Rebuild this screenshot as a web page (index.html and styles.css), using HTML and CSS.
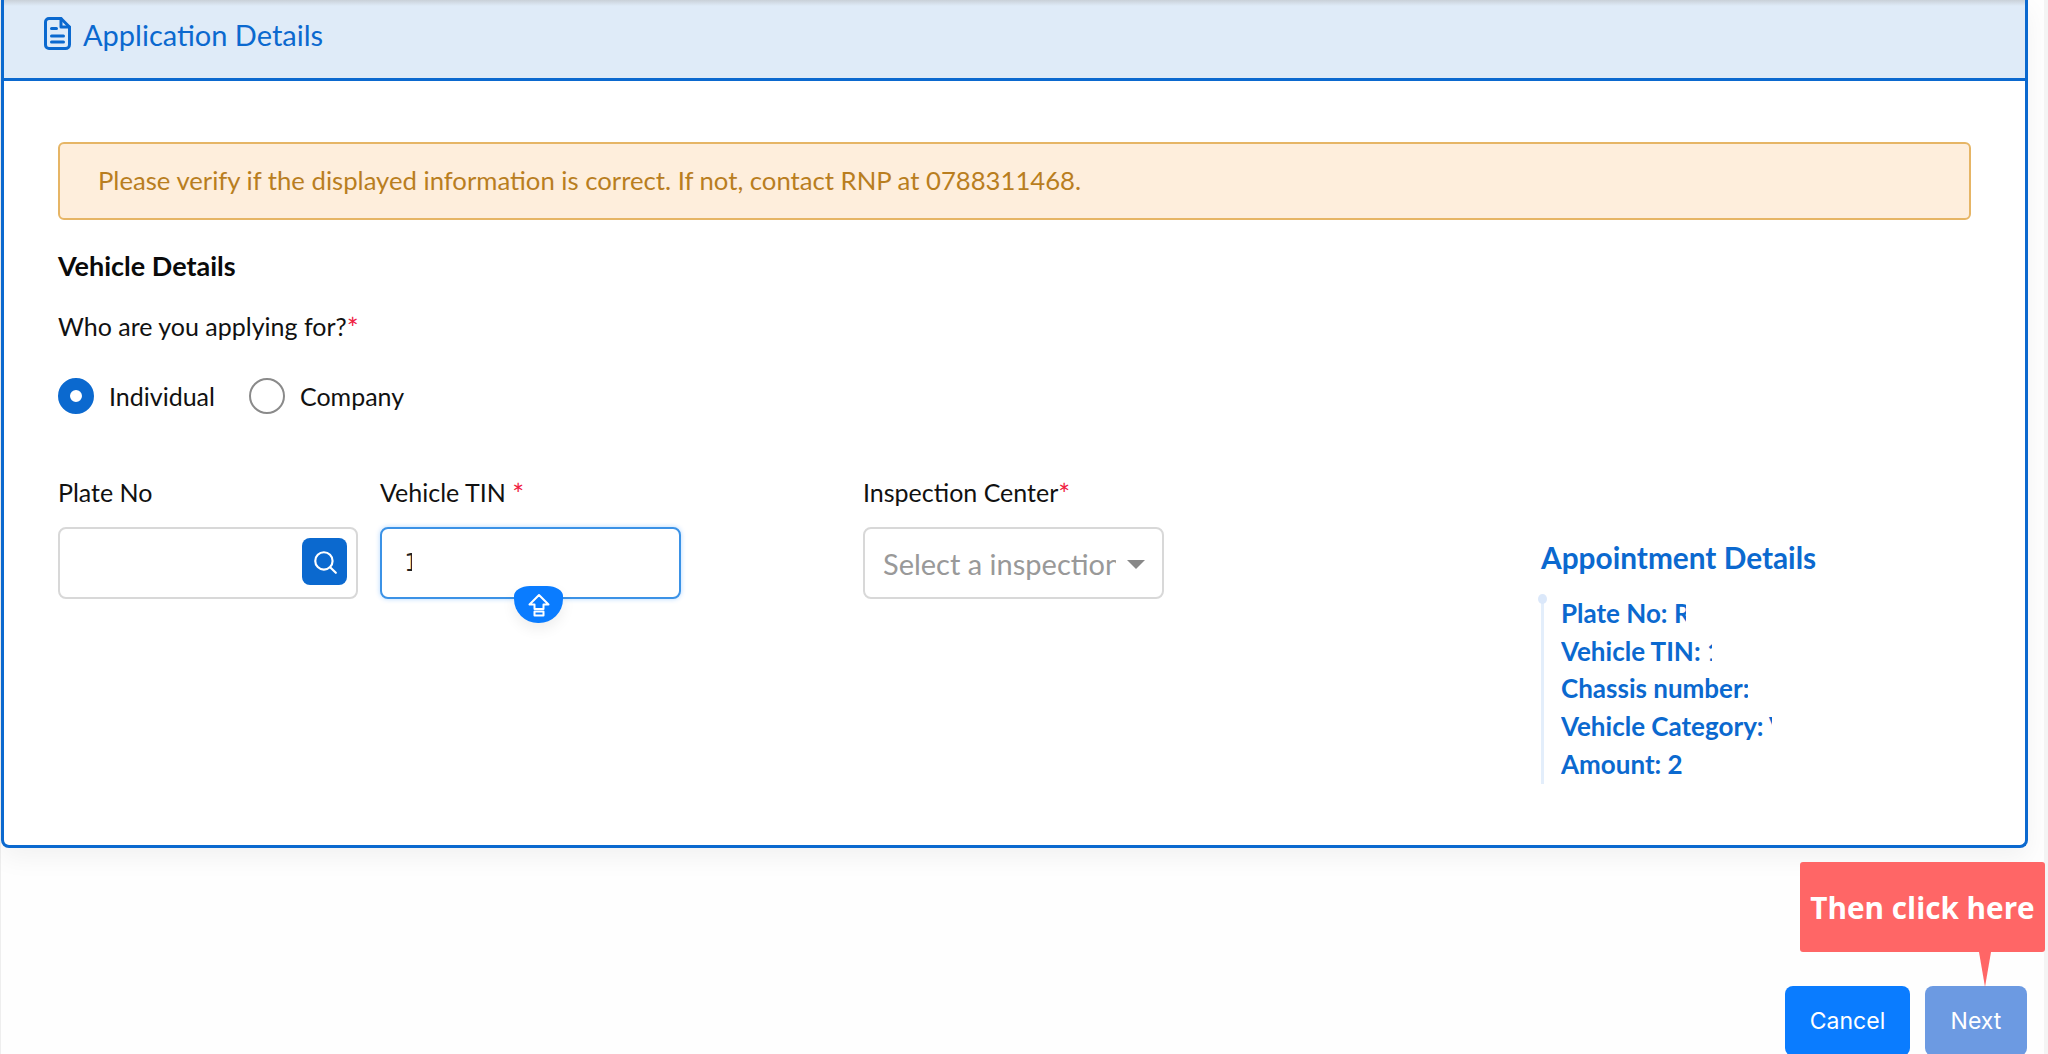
FILE: index.html
```html
<!DOCTYPE html>
<html lang="en">
<head>
<meta charset="utf-8">
<title>Application Details</title>
<link rel="stylesheet" href="styles.css">
</head>
<body>
<div class="page">
  <main class="main">
    <section class="card">
      <header class="card-head">
        <svg class="doc-icon" viewBox="0 0 27 33" fill="none" stroke="#0b69cf" stroke-width="3" stroke-linejoin="round" stroke-linecap="round">
          <path d="M5 1.500h12l8.500 8.500v17.500a4 4 0 0 1-4 4H5a3.500 3.500 0 0 1-3.500-3.500V5A3.500 3.500 0 0 1 5 1.500z"/>
          <path d="M17 1.500V10h8.500"/>
          <path d="M7.500 11.500h5M7.500 19h12M7.500 25h12"/>
        </svg>
        <h1 class="card-title">Application Details</h1>
      </header>
      <div class="card-body">
        <div class="alert">Please verify if the displayed information is correct. If not, contact RNP at 0788311468.</div>
        <h2 class="section-title">Vehicle Details</h2>
        <p class="question">Who are you applying for?<span class="req">*</span></p>
        <div class="radios">
          <label class="radio"><span class="dot dot-on"></span>Individual</label>
          <label class="radio"><span class="dot"></span>Company</label>
        </div>
        <div class="fields">
          <div class="field field-plate">
            <div class="label">Plate No</div>
            <div class="input">
              <span class="search-btn">
                <svg class="search-icon" viewBox="0 0 24 24" fill="none" stroke="#fff" stroke-width="2" stroke-linecap="round"><circle cx="11" cy="11" r="8"/><path d="M17 17l5 5"/></svg>
              </span>
            </div>
          </div>
          <div class="field field-tin">
            <div class="label">Vehicle TIN <span class="req">*</span></div>
            <div class="input input-focus"><span class="typed">1</span>
              <span class="shift-btn">
                <svg class="shift-icon" viewBox="0 0 24 24" fill="none" stroke="#fff" stroke-width="2" stroke-linejoin="round"><path d="M12 2L2.500 11.500H7.500V16H16.500V11.500H21.500z"/><rect x="7.500" y="18.500" width="9" height="4"/></svg>
              </span>
            </div>
          </div>
          <div class="field field-center">
            <div class="label">Inspection Center<span class="req">*</span></div>
            <div class="input input-select">
              <span class="placeholder">Select a inspection center</span>
              <span class="caret"></span>
            </div>
          </div>
          <aside class="summary">
            <h3 class="summary-title">Appointment Details</h3>
            <ul class="timeline">
              <li class="row row-a">Plate No: RAB</li>
              <li class="row row-b">Vehicle TIN: 100</li>
              <li class="row row-c">Chassis number: A</li>
              <li class="row row-d">Vehicle Category: V</li>
              <li class="row row-e">Amount: 2</li>
            </ul>
          </aside>
        </div>
      </div>
    </section>
    <div class="actions">
      <button class="btn btn-cancel" type="button">Cancel</button>
      <div class="next-wrap">
        <button class="btn btn-next" type="button">Next</button>
        <div class="callout">Then click here</div>
      </div>
    </div>
  </main>
  <div class="gutter"></div>
</div>
</body>
</html>
```
FILE: styles.css
```css
* { box-sizing: border-box; }
html, body { margin: 0; padding: 0; height: 100%; overflow: hidden; }
body { background: #fefefe; font-family: "Lato", sans-serif; color: #111; }
.page { display: flex; height: 1054px; overflow: hidden; }
.main { flex: 1; min-width: 0; padding: 0 16px 0 0; border-left: 1px solid #eee; }
.gutter { width: 4px; background: #f4f4f4; }

.card {
  height: 848px;
  border: solid #0b69cf;
  border-width: 0 3px 3px 3px;
  border-radius: 0 0 8px 8px;
  background: #fff;
  box-shadow: 0 10px 26px rgba(0,0,0,.05);
}
.card-head {
  height: 81px;
  display: flex;
  align-items: center;
  gap: 13px;
  padding: 0 0 12px 40px;
  background: linear-gradient(#c9d0d8 0, #dfebf8 6px, #dfebf8 100%);
  border-bottom: 3px solid #0b69cf;
}
.doc-icon { width: 27px; height: 33px; flex: none; }
.card-title { margin: 3px 0 0 -1px; font-size: 29px; font-weight: 400; color: #0b69cf; line-height: 36px; }
.card-body { padding: 61px 54px 0 54px; }
.alert {
  height: 78px;
  display: flex;
  align-items: center;
  padding: 0 0 2px 38px;
  font-size: 25.700px;
  color: #b97e1f;
  background: #feeedc;
  border: 2px solid #e6b565;
  border-radius: 6px;
}
.section-title { margin: 31px 0 0; font-size: 27px; line-height: 30px; font-weight: 700; color: #0a0a0a; }
.question { margin: 30px 0 0; font-size: 25px; line-height: 30px; color: #111; }
.req { color: #f0203f; font-size: 28px; line-height: 20px; vertical-align: -3px; }
.radios { display: flex; gap: 34px; margin-top: 37px; }
.radio { display: flex; align-items: center; gap: 15px; font-size: 25px; height: 36px; color: #111; }
.dot { width: 36px; height: 36px; border-radius: 50%; border: 2px solid #8a8a8a; background: #fff; }
.dot-on { border: 12px solid #0b69cf; }
.fields { display: flex; align-items: flex-start; margin-top: 63px; }
.field { width: 301px; flex: none; }
.field-plate { width: 300px; }
.field-tin { margin-left: 22px; }
.field-center { margin-left: 182px; }
.label { font-size: 25px; line-height: 30px; color: #111; }
.input {
  position: relative;
  margin-top: 20px;
  height: 72px;
  border: 2px solid #d8d8d8;
  border-radius: 8px;
  background: #fff;
  display: flex;
  align-items: center;
  font-size: 25px;
}
.input-focus { border-color: #3b92e6; box-shadow: 0 0 5px rgba(11,125,255,.3); padding-left: 22px; }
.typed { display: inline-block; width: 8px; overflow: hidden; font-family: "DejaVu Sans Mono", monospace; font-size: 24px; color: #222; }
.search-btn {
  position: absolute;
  right: 9px;
  top: 9px;
  width: 45px;
  height: 47px;
  border-radius: 8px;
  background: #0b69cf;
  display: flex;
  align-items: center;
  justify-content: center;
}
.search-icon { width: 26px; height: 26px; }
.shift-btn {
  position: absolute;
  left: 132px;
  top: 57px;
  width: 49px;
  height: 37px;
  border-radius: 16px 16px 24px 24px / 10px 10px 24px 24px;
  background: #0a7cff;
  box-shadow: 0 6px 14px rgba(0,0,0,.07);
  display: flex;
  align-items: center;
  justify-content: center;
}
.shift-icon { width: 24px; height: 24px; }
.input-select { padding-left: 18px; padding-right: 46px; }
.placeholder { white-space: nowrap; overflow: hidden; color: #999; font-size: 29px; flex: 1; }
.caret {
  position: absolute;
  right: 17px;
  top: 31px;
  border: 9px solid transparent;
  border-top: 9px solid #888;
  border-bottom: 0;
}
.summary { margin-left: 377px; margin-top: 66px; flex: none; }
.summary-title { margin: 0; font-size: 29.800px; line-height: 30px; font-weight: 700; color: #0b69cf; white-space: nowrap; }
.timeline {
  position: relative;
  list-style: none;
  margin: 22px 0 0;
  padding: 0 0 0 17px;
  height: 189px;
  border-left: 3px solid #e3eefb;
}
.timeline::before {
  content: "";
  position: absolute;
  left: -6px;
  top: -1px;
  width: 9px;
  height: 10px;
  border-radius: 50%;
  background: #dbe8fa;
}
.row { height: 37.700px; line-height: 36px; font-size: 26px; font-weight: 700; color: #0b69cf; white-space: nowrap; overflow: hidden; }
.row-a { width: 125px; }
.row-b { width: 151px; }
.row-c { width: 187px; }
.row-d { width: 211px; }
.row-e { width: 130px; }

.actions { display: flex; justify-content: flex-end; gap: 15px; margin: 138px 1px 0 0; }
.btn { height: 70px; border: 0; border-radius: 8px; color: #fff; font: 400 23px "Inter", "Lato", sans-serif; }
.btn-cancel { width: 125px; background: #0a7cff; }
.btn-next { width: 102px; background: #6c9ae2; display: block; }
.next-wrap { position: relative; }
.callout {
  position: absolute;
  right: -18px;
  bottom: 104px;
  width: 245px;
  height: 90px;
  border-radius: 3px;
  background: #ff6666;
  color: #fff;
  font: 700 29.700px "Open Sans", sans-serif;
  display: flex;
  align-items: center;
  justify-content: center;
  white-space: nowrap;
}
.callout::after {
  content: "";
  position: absolute;
  left: 179px;
  top: 90px;
  width: 12px;
  height: 35px;
  background: #ff6666;
  clip-path: polygon(0 0, 100% 0, 50% 100%);
}
```
